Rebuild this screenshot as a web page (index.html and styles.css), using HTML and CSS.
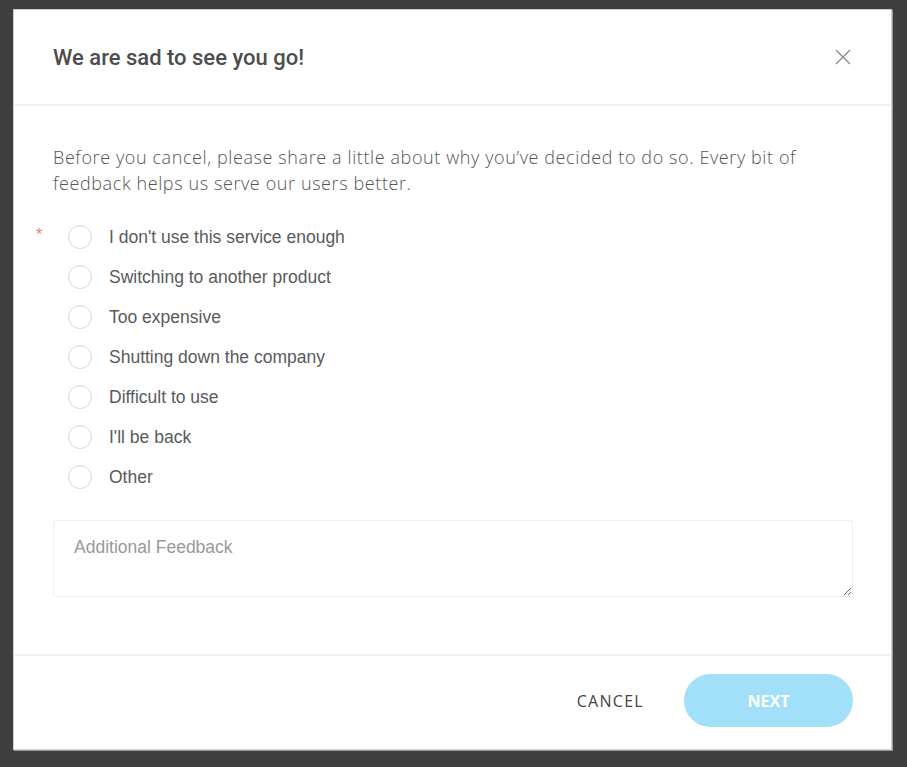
FILE: index.html
```html
<!DOCTYPE html>
<html lang="en">
<head>
  <meta charset="UTF-8" />
  <title>Cancel subscription</title>
  <link rel="stylesheet" href="styles.css">
</head>
<body>
  <div class="modal">
    <div class="modal-header">
      <h1>We are sad to see you go!</h1>
      <button class="close" aria-label="Close">
        <svg width="16" height="16" viewBox="0 0 16 16">
          <path d="M1 1 L15 15 M15 1 L1 15" stroke="#8a8a8a" stroke-width="1.4" fill="none" />
        </svg>
      </button>
    </div>

    <div class="modal-body">
      <p class="intro">
        Before you cancel, please share a little about why you’ve decided to do so. Every bit of<br>
        feedback helps us serve our users better.
      </p>

      <div class="reasons">
        <span class="required">*</span>
        <label class="reason"><input type="radio" name="reason" /><span class="dot"></span>I don't use this service enough</label>
        <label class="reason"><input type="radio" name="reason" /><span class="dot"></span>Switching to another product</label>
        <label class="reason"><input type="radio" name="reason" /><span class="dot"></span>Too expensive</label>
        <label class="reason"><input type="radio" name="reason" /><span class="dot"></span>Shutting down the company</label>
        <label class="reason"><input type="radio" name="reason" /><span class="dot"></span>Difficult to use</label>
        <label class="reason"><input type="radio" name="reason" /><span class="dot"></span>I'll be back</label>
        <label class="reason"><input type="radio" name="reason" /><span class="dot"></span>Other</label>
      </div>

      <textarea class="feedback" placeholder="Additional Feedback"></textarea>
    </div>

    <div class="modal-footer">
      <button class="btn-cancel">CANCEL</button>
      <button class="btn-next">NEXT</button>
    </div>
  </div>
</body>
</html>
```

FILE: styles.css
```css
html, body {
  margin: 0;
  padding: 0;
}

body {
  background: #3e3e3e;
  padding: 9px 15px 17px 13px;
  font-family: "Liberation Sans", Arial, sans-serif;
}

.modal {
  width: 879px;
  box-sizing: border-box;
  background: #fff;
  border: 1px solid #cfcfcf;
  box-shadow: 1px 1px 0 #9a9a9a;
}

.modal-header {
  height: 96px;
  box-sizing: border-box;
  padding: 0 40px 0 39px;
  display: flex;
  align-items: center;
  justify-content: space-between;
  border-bottom: 2px solid #efeff4;
}

h1 {
  margin: 0;
  font-family: Roboto, sans-serif;
  font-weight: 500;
  font-size: 22px;
  color: #4d4d4d;
}

.close {
  background: none;
  border: 0;
  padding: 0;
  width: 16px;
  height: 16px;
  display: flex;
}

.modal-body {
  padding: 38px 38px 57px 39px;
  border-bottom: 2px solid #efeff4;
}

.intro {
  margin: 0;
  font-family: "Open Sans", sans-serif;
  font-weight: 300;
  font-size: 18px;
  letter-spacing: 0.6px;
  line-height: 26px;
  color: #555;
  white-space: nowrap;
}

.reasons {
  position: relative;
  margin-top: 21px;
  padding-left: 15px;
}

.required {
  position: absolute;
  left: -17px;
  top: 9px;
  color: #f07a6a;
  font-size: 16px;
}

.reason {
  display: flex;
  align-items: center;
  height: 40px;
  font-size: 17.5px;
  color: #5a5a5a;
}

.reason input {
  display: none;
}

.dot {
  width: 22px;
  height: 22px;
  border: 1px solid #d3d6e2;
  border-radius: 50%;
  margin-right: 17px;
}

.feedback {
  display: block;
  width: 100%;
  height: 77px;
  box-sizing: border-box;
  margin-top: 23px;
  padding: 16px 20px;
  border: 1px solid #f0f0f0;
  border-radius: 3px;
  font-family: "Liberation Sans", Arial, sans-serif;
  font-size: 17.5px;
  color: #555;
}

.feedback::placeholder {
  color: #999;
}

.modal-footer {
  height: 93px;
  box-sizing: border-box;
  display: flex;
  align-items: flex-start;
  justify-content: flex-end;
  padding: 18px 38px 0 0;
  gap: 40px;
}

.btn-cancel {
  height: 53px;
  background: none;
  border: 0;
  font-family: "Open Sans", sans-serif;
  font-weight: 500;
  font-size: 16px;
  letter-spacing: 1.3px;
  color: #444;
  padding: 0;
}

.btn-next {
  width: 169px;
  height: 53px;
  border: 0;
  border-radius: 27px;
  background: #a2dff8;
  color: #fff;
  font-family: "Open Sans", sans-serif;
  font-weight: 700;
  font-size: 16px;
}
```
